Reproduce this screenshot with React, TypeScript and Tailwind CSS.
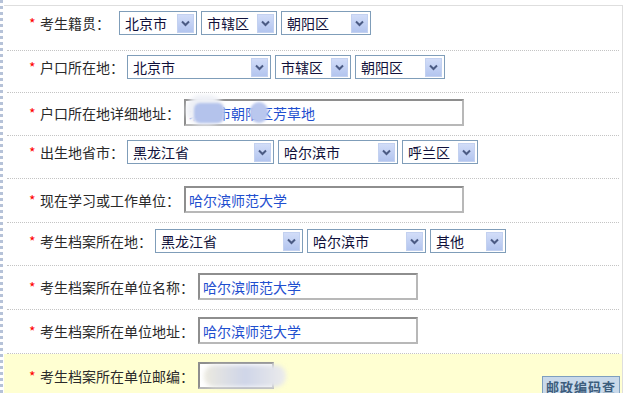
import React from "react";

type Ctl =
  | { kind: "select"; value: string; w: number }
  | { kind: "input"; value: string; w: number; blur?: "addr" | "zip" };

interface Row {
  label: string;
  labelW: number;
  h: number;
  pt: number;
  yellow?: boolean;
  controls: Ctl[];
}

const rows: Row[] = [
  {
    label: "考生籍贯：",
    labelW: 79,
    h: 44,
    pt: 5,
    controls: [
      { kind: "select", value: "北京市", w: 78 },
      { kind: "select", value: "市辖区", w: 76 },
      { kind: "select", value: "朝阳区", w: 90 },
    ],
  },
  {
    label: "户口所在地：",
    labelW: 87,
    h: 41,
    pt: 4,
    controls: [
      { kind: "select", value: "北京市", w: 144 },
      { kind: "select", value: "市辖区", w: 76 },
      { kind: "select", value: "朝阳区", w: 90 },
    ],
  },
  {
    label: "户口所在地详细地址：",
    labelW: 144,
    h: 42,
    pt: 6,
    controls: [{ kind: "input", value: "北京市朝阳区芳草地", w: 280, blur: "addr" }],
  },
  {
    label: "出生地省市：",
    labelW: 87,
    h: 42,
    pt: 4,
    controls: [
      { kind: "select", value: "黑龙江省", w: 147 },
      { kind: "select", value: "哈尔滨市", w: 120 },
      { kind: "select", value: "呼兰区", w: 76 },
    ],
  },
  {
    label: "现在学习或工作单位：",
    labelW: 144,
    h: 43,
    pt: 7,
    controls: [{ kind: "input", value: "哈尔滨师范大学", w: 280 }],
  },
  {
    label: "考生档案所在地：",
    labelW: 115,
    h: 42,
    pt: 6,
    controls: [
      { kind: "select", value: "黑龙江省", w: 148 },
      { kind: "select", value: "哈尔滨市", w: 119 },
      { kind: "select", value: "其他", w: 76 },
    ],
  },
  {
    label: "考生档案所在单位名称：",
    labelW: 158,
    h: 43,
    pt: 7,
    controls: [{ kind: "input", value: "哈尔滨师范大学", w: 220 }],
  },
  {
    label: "考生档案所在单位地址：",
    labelW: 158,
    h: 43,
    pt: 7,
    controls: [{ kind: "input", value: "哈尔滨师范大学", w: 220 }],
  },
  {
    label: "考生档案所在单位邮编：",
    labelW: 158,
    h: 44,
    pt: 8,
    yellow: true,
    controls: [{ kind: "input", value: "", w: 76, blur: "zip" }],
  },
];

function Select({ value, w }: { value: string; w: number }) {
  return (
    <div
      className="h-[24px] border border-[#7f9db9] bg-white flex items-center justify-between pl-[5px] pr-[2px] shrink-0"
      style={{ width: w }}
    >
      <span className="text-[14px] text-[#10103a] leading-none">{value}</span>
      <span className="w-[17px] h-[19px] bg-gradient-to-b from-[#d2ddf8] to-[#b3c5ef] border border-[#c3d1f0] flex items-center justify-center">
        <svg width="9" height="7" viewBox="0 0 9 7">
          <path
            d="M1 1.5 L4.5 5 L8 1.5"
            fill="none"
            stroke="#4b5b84"
            strokeWidth="2"
          />
        </svg>
      </span>
    </div>
  );
}

function Input({
  value,
  w,
  blur,
}: {
  value: string;
  w: number;
  blur?: "addr" | "zip";
}) {
  return (
    <div
      className="relative h-[27px] border-2 border-t-[#8e8e8e] border-l-[#8e8e8e] border-b-[#b8b8b8] border-r-[#b8b8b8] bg-white flex items-center pl-[3px] shrink-0"
      style={{ width: w }}
    >
      <span className="text-[14px] text-[#1f4fcf] leading-none">{value}</span>
      {blur === "addr" && (
        <>
          <div className="absolute left-[0px] top-[-6px] w-[38px] h-[30px] rounded-full bg-[#eef0f6] blur-[2px]" />
          <div className="absolute left-[8px] top-[2px] w-[30px] h-[20px] rounded-[6px] bg-[#b4c3ec] blur-[1px]" />
          <div className="absolute left-[64px] top-[1px] w-[18px] h-[21px] rounded-full bg-[#b9c7ee] blur-[1px]" />
        </>
      )}
      {blur === "zip" && (
        <div className="absolute left-[4px] top-[1px] w-[82px] h-[22px] rounded-[10px] bg-gradient-to-r from-[#eceae0] via-[#cfd5e8] to-[#ececec] blur-[2px]" />
      )}
    </div>
  );
}

export default function App() {
  return (
    <div
      className="w-[630px] h-[393px] overflow-hidden bg-white flex"
      style={{ fontFamily: '"Noto Sans CJK SC", "Liberation Sans", sans-serif' }}
    >
      <div className="w-[4px] border-l-[3px] border-dotted border-[#b6c2d8]" />
      <div className="mt-[5px] w-[619px] border-t border-r border-[#dedede] flex flex-col">
        {rows.map((row, i) => (
          <div key={i} className="flex flex-col">
            <div
              className={`flex items-start pl-[25px] pr-[2px] ${
                row.yellow ? "bg-[#ffffd2]" : ""
              }`}
              style={{ height: row.h, paddingTop: row.pt }}
            >
              <div
                className="flex items-center"
                style={{ height: row.controls[0].kind === "select" ? 24 : 27 }}
              >
                <span className="text-[#ff0000] text-[14px] w-[11px] leading-none">
                  *
                </span>
                <span
                  className="text-[14px] text-[#2a2a2a] leading-none whitespace-nowrap"
                  style={{ width: row.labelW }}
                >
                  {row.label}
                </span>
              </div>
              <div className="flex items-center gap-[4px]">
                {row.controls.map((c, j) =>
                  c.kind === "select" ? (
                    <Select key={j} value={c.value} w={c.w} />
                  ) : (
                    <Input key={j} value={c.value} w={c.w} blur={c.blur} />
                  ),
                )}
              </div>
              {row.yellow && (
                <div className="ml-auto mt-[14px] h-[24px] px-[3px] border border-[#7e9fbf] bg-[#c9d9ea] text-[13px] tracking-[1px] font-bold text-[#3d5d7d] leading-[20px] whitespace-nowrap">
                  邮政编码查
                </div>
              )}
            </div>
            {i < rows.length - 1 && (
              <div className="mx-[3px] border-b border-dotted border-[#c4c4c4]" />
            )}
          </div>
        ))}
      </div>
    </div>
  );
}
